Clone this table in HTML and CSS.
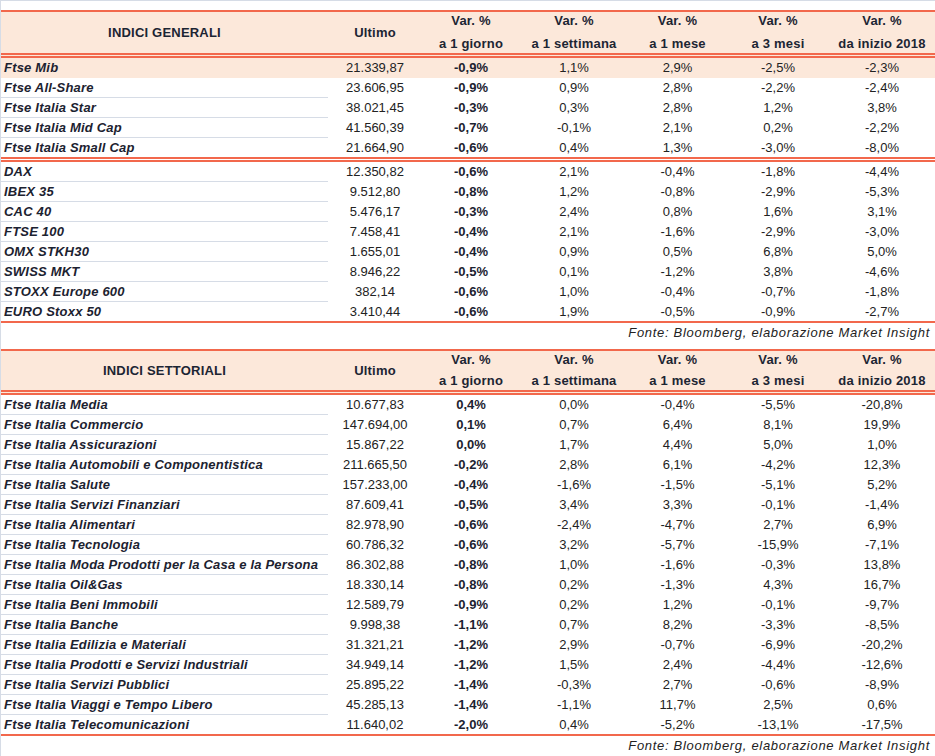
FILE: index.html
```html
<!DOCTYPE html>
<html lang="it">
<head>
<meta charset="utf-8">
<title>Indici</title>
<link rel="stylesheet" href="styles.css">
</head>
<body>
<div class="sheet">
  <table class="grid first">
    <colgroup><col class="c1"><col class="c2"><col class="c3"><col class="c4"><col class="c5"><col class="c6"><col class="c7"></colgroup>
    <thead>
      <tr>
        <th>INDICI GENERALI</th>
        <th>Ultimo</th>
        <th><span class="l1">Var. %</span><span class="l2">a 1 giorno</span></th>
        <th><span class="l1">Var. %</span><span class="l2">a 1 settimana</span></th>
        <th><span class="l1">Var. %</span><span class="l2">a 1 mese</span></th>
        <th><span class="l1">Var. %</span><span class="l2">a 3 mesi</span></th>
        <th><span class="l1">Var. %</span><span class="l2">da inizio 2018</span></th>
      </tr>
    </thead>
    <tbody>
      <tr class="hl"><td class="name">Ftse Mib</td><td>21.339,87</td><td class="b">-0,9%</td><td>1,1%</td><td>2,9%</td><td>-2,5%</td><td>-2,3%</td></tr>
      <tr><td class="name">Ftse All-Share</td><td>23.606,95</td><td class="b">-0,9%</td><td>0,9%</td><td>2,8%</td><td>-2,2%</td><td>-2,4%</td></tr>
      <tr><td class="name">Ftse Italia Star</td><td>38.021,45</td><td class="b">-0,3%</td><td>0,3%</td><td>2,8%</td><td>1,2%</td><td>3,8%</td></tr>
      <tr><td class="name">Ftse Italia Mid Cap</td><td>41.560,39</td><td class="b">-0,7%</td><td>-0,1%</td><td>2,1%</td><td>0,2%</td><td>-2,2%</td></tr>
      <tr class="sep"><td class="name">Ftse Italia Small Cap</td><td>21.664,90</td><td class="b">-0,6%</td><td>0,4%</td><td>1,3%</td><td>-3,0%</td><td>-8,0%</td></tr>
      <tr><td class="name">DAX</td><td>12.350,82</td><td class="b">-0,6%</td><td>2,1%</td><td>-0,4%</td><td>-1,8%</td><td>-4,4%</td></tr>
      <tr><td class="name">IBEX 35</td><td>9.512,80</td><td class="b">-0,8%</td><td>1,2%</td><td>-0,8%</td><td>-2,9%</td><td>-5,3%</td></tr>
      <tr><td class="name">CAC 40</td><td>5.476,17</td><td class="b">-0,3%</td><td>2,4%</td><td>0,8%</td><td>1,6%</td><td>3,1%</td></tr>
      <tr><td class="name">FTSE 100</td><td>7.458,41</td><td class="b">-0,4%</td><td>2,1%</td><td>-1,6%</td><td>-2,9%</td><td>-3,0%</td></tr>
      <tr><td class="name">OMX STKH30</td><td>1.655,01</td><td class="b">-0,4%</td><td>0,9%</td><td>0,5%</td><td>6,8%</td><td>5,0%</td></tr>
      <tr><td class="name">SWISS MKT</td><td>8.946,22</td><td class="b">-0,5%</td><td>0,1%</td><td>-1,2%</td><td>3,8%</td><td>-4,6%</td></tr>
      <tr><td class="name">STOXX Europe 600</td><td>382,14</td><td class="b">-0,6%</td><td>1,0%</td><td>-0,4%</td><td>-0,7%</td><td>-1,8%</td></tr>
      <tr class="last"><td class="name">EURO Stoxx 50</td><td>3.410,44</td><td class="b">-0,6%</td><td>1,9%</td><td>-0,5%</td><td>-0,9%</td><td>-2,7%</td></tr>
    </tbody>
  </table>
  <p class="source gap">Fonte: Bloomberg, elaborazione Market Insight</p>

  <table class="grid second">
    <colgroup><col class="c1"><col class="c2"><col class="c3"><col class="c4"><col class="c5"><col class="c6"><col class="c7"></colgroup>
    <thead>
      <tr>
        <th>INDICI SETTORIALI</th>
        <th>Ultimo</th>
        <th><span class="l1">Var. %</span><span class="l2">a 1 giorno</span></th>
        <th><span class="l1">Var. %</span><span class="l2">a 1 settimana</span></th>
        <th><span class="l1">Var. %</span><span class="l2">a 1 mese</span></th>
        <th><span class="l1">Var. %</span><span class="l2">a 3 mesi</span></th>
        <th><span class="l1">Var. %</span><span class="l2">da inizio 2018</span></th>
      </tr>
    </thead>
    <tbody>
      <tr><td class="name">Ftse Italia Media</td><td>10.677,83</td><td class="b">0,4%</td><td>0,0%</td><td>-0,4%</td><td>-5,5%</td><td>-20,8%</td></tr>
      <tr><td class="name">Ftse Italia Commercio</td><td>147.694,00</td><td class="b">0,1%</td><td>0,7%</td><td>6,4%</td><td>8,1%</td><td>19,9%</td></tr>
      <tr><td class="name">Ftse Italia Assicurazioni</td><td>15.867,22</td><td class="b">0,0%</td><td>1,7%</td><td>4,4%</td><td>5,0%</td><td>1,0%</td></tr>
      <tr><td class="name">Ftse Italia Automobili e Componentistica</td><td>211.665,50</td><td class="b">-0,2%</td><td>2,8%</td><td>6,1%</td><td>-4,2%</td><td>12,3%</td></tr>
      <tr><td class="name">Ftse Italia Salute</td><td>157.233,00</td><td class="b">-0,4%</td><td>-1,6%</td><td>-1,5%</td><td>-5,1%</td><td>5,2%</td></tr>
      <tr><td class="name">Ftse Italia Servizi Finanziari</td><td>87.609,41</td><td class="b">-0,5%</td><td>3,4%</td><td>3,3%</td><td>-0,1%</td><td>-1,4%</td></tr>
      <tr><td class="name">Ftse Italia Alimentari</td><td>82.978,90</td><td class="b">-0,6%</td><td>-2,4%</td><td>-4,7%</td><td>2,7%</td><td>6,9%</td></tr>
      <tr><td class="name">Ftse Italia Tecnologia</td><td>60.786,32</td><td class="b">-0,6%</td><td>3,2%</td><td>-5,7%</td><td>-15,9%</td><td>-7,1%</td></tr>
      <tr><td class="name">Ftse Italia Moda Prodotti per la Casa e la Persona</td><td>86.302,88</td><td class="b">-0,8%</td><td>1,0%</td><td>-1,6%</td><td>-0,3%</td><td>13,8%</td></tr>
      <tr><td class="name">Ftse Italia Oil&amp;Gas</td><td>18.330,14</td><td class="b">-0,8%</td><td>0,2%</td><td>-1,3%</td><td>4,3%</td><td>16,7%</td></tr>
      <tr><td class="name">Ftse Italia Beni Immobili</td><td>12.589,79</td><td class="b">-0,9%</td><td>0,2%</td><td>1,2%</td><td>-0,1%</td><td>-9,7%</td></tr>
      <tr><td class="name">Ftse Italia Banche</td><td>9.998,38</td><td class="b">-1,1%</td><td>0,7%</td><td>8,2%</td><td>-3,3%</td><td>-8,5%</td></tr>
      <tr><td class="name">Ftse Italia Edilizia e Materiali</td><td>31.321,21</td><td class="b">-1,2%</td><td>2,9%</td><td>-0,7%</td><td>-6,9%</td><td>-20,2%</td></tr>
      <tr><td class="name">Ftse Italia Prodotti e Servizi Industriali</td><td>34.949,14</td><td class="b">-1,2%</td><td>1,5%</td><td>2,4%</td><td>-4,4%</td><td>-12,6%</td></tr>
      <tr><td class="name">Ftse Italia Servizi Pubblici</td><td>25.895,22</td><td class="b">-1,4%</td><td>-0,3%</td><td>2,7%</td><td>-0,6%</td><td>-8,9%</td></tr>
      <tr><td class="name">Ftse Italia Viaggi e Tempo Libero</td><td>45.285,13</td><td class="b">-1,4%</td><td>-1,1%</td><td>11,7%</td><td>2,5%</td><td>0,6%</td></tr>
      <tr class="last"><td class="name">Ftse Italia Telecomunicazioni</td><td>11.640,02</td><td class="b">-2,0%</td><td>0,4%</td><td>-5,2%</td><td>-13,1%</td><td>-17,5%</td></tr>
    </tbody>
  </table>
  <p class="source">Fonte: Bloomberg, elaborazione Market Insight</p>
</div>
</body>
</html>
```

FILE: styles.css
```css
html, body {
  margin: 0;
  padding: 0;
  background: #ffffff;
}

body {
  font-family: "Liberation Sans", Arial, sans-serif;
  font-size: 13px;
  color: #1f2530;
}

.sheet {
  border-top: 1px solid #d6dce6;
  border-left: 1px solid #d6dce6;
  padding-top: 9px;
  min-height: 746px;
  width: 934px;
}

.grid {
  width: 934px;
  table-layout: fixed;
  border-collapse: separate;
  border-spacing: 0;
}

.c1 { width: 327px; }
.c2 { width: 94px; }
.c3 { width: 98px; }
.c4 { width: 108px; }
.c5 { width: 99px; }
.c6 { width: 102px; }
.c7 { width: 106px; }

.grid th {
  background: #fce8da;
  border-top: 2px solid #f2684c;
  border-bottom: 5px double #f2684c;
  padding: 0;
  height: 41px;
  font-weight: bold;
  font-size: 13px;
  letter-spacing: 0.2px;
  line-height: 18px;
  text-align: center;
  vertical-align: middle;
  color: #1c2533;
}

.second th {
  height: 39px;
}

.grid th .l1,
.grid th .l2 {
  display: block;
}

.grid th .l2 {
  margin-top: 5px;
}

.second th .l2 {
  margin-top: 3px;
}

.grid td {
  padding: 0;
  line-height: 19px;
  text-align: center;
  border-bottom: 1px solid transparent;
  white-space: nowrap;
  color: #222222;
}

.grid td.name {
  text-align: left;
  padding-left: 3px;
  font-weight: bold;
  font-style: italic;
  letter-spacing: 0.2px;
  border-bottom-color: #d6dce6;
  color: #1c2230;
}

.grid td.b {
  font-weight: bold;
  color: #1c2230;
}

.grid tr.hl td {
  background: #fce8da;
  border-bottom-color: #fce8da;
}

.grid tr.sep td {
  border-bottom: 5px double #f2684c;
}

.grid tr.last td {
  border-bottom: 2px solid #f2684c;
}

.source {
  margin: 0;
  text-align: right;
  padding-right: 5px;
  font-style: italic;
  letter-spacing: 0.7px;
  line-height: 19px;
  color: #222222;
}

.source.gap {
  height: 26px;
}
```
